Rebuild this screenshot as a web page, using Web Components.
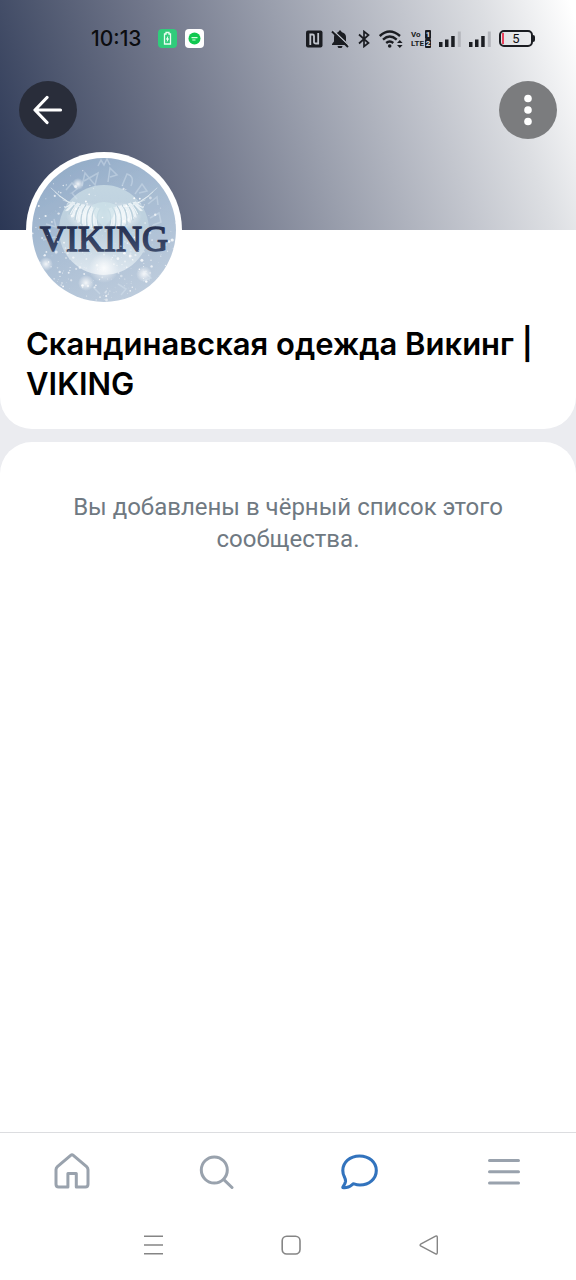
<!DOCTYPE html>
<html lang="ru">
<head>
<meta charset="utf-8">
<meta name="viewport" content="width=device-width, initial-scale=1">
<title>Скандинавская одежда Викинг | VIKING</title>
<style>
    body{
        margin: 0;
        background: #fff;
        font-family: Roboto, "Noto Sans", sans-serif;
    }
</style>
</head>
<body>
<community-page>
    <community-cover slot="cover">
        <status-bar slot="status" time="10:13" battery="5"></status-bar>
        <round-button slot="start" icon="back" label="Назад"></round-button>
        <round-button slot="end" icon="more" label="Ещё" light></round-button>
    </community-cover>
    <profile-card>
        <community-avatar slot="avatar" name="VIKING"></community-avatar>
        Скандинавская одежда Викинг | VIKING
    </profile-card>
    <notice-card>Вы добавлены в чёрный список этого сообщества.</notice-card>
    <tab-bar slot="footer"></tab-bar>
    <system-nav slot="footer"></system-nav>
</community-page>

<script>
// icons shared by the buttons and the bars
const icons = {
    back: '<svg width="30" height="30" viewBox="0 0 30 30" fill="none" stroke="currentColor" stroke-width="3.200" stroke-linecap="round" stroke-linejoin="round"><path d="M27.500 15H2.500M14 2.500L2 15l12 12.500"/></svg>',
    more: '<svg width="30" height="32" viewBox="0 0 30 32" fill="currentColor"><circle cx="15" cy="4.500" r="3.800"/><circle cx="15" cy="16" r="3.800"/><circle cx="15" cy="27.500" r="3.800"/></svg>',
    home: '<svg width="36" height="38" viewBox="0 0 36 38" fill="none" stroke="currentColor" stroke-width="3" stroke-linejoin="round"><path d="M16.700 2.300L3.400 13.600Q2 14.900 2 16.700V31.300Q2 34 4.700 34H13.900V20.500H22.300V34H31.300Q34 34 34 31.300V16.700Q34 14.900 32.600 13.600L19.300 2.300Q18 1.200 16.700 2.300Z"/></svg>',
    search: '<svg width="36" height="36" viewBox="0 0 36 36" fill="none" stroke="currentColor" stroke-width="3" stroke-linecap="round"><circle cx="16.300" cy="16" r="13"/><path d="M25.800 25.600L34 33.500"/></svg>',
    chat: '<svg width="38" height="36" viewBox="-1 0 38 36" fill="none" stroke="currentColor" stroke-width="3.100" stroke-linejoin="round"><path d="M17.500 2C27.300 2 34.300 8.300 34.300 16.500S27.100 31 18 31C15.800 31 14 30.600 12 29.900C10.500 29.400 9.800 31.800 6.300 33C4.300 33.700 2 33.800 .8 33.500C.5 33.300 3.100 30.500 3.500 27.500C3.700 25.500 3.200 24.500 2.500 23.100C1.400 21.200 .8 19 .8 16.500C.8 8.300 7.900 2 17.500 2Z"/></svg>',
    menu: '<svg width="36" height="36" viewBox="0 0 36 36" fill="none" stroke="currentColor" stroke-width="3" stroke-linecap="round"><path d="M3.500 6.500H32.500M3.500 17.700H32.500M3.500 28.900H32.500"/></svg>',
    recent: '<svg width="20" height="20" viewBox="0 0 20 20" fill="none" stroke="currentColor" stroke-width="1.600"><path d="M0 1.200H19M0 10H19M0 18.800H19"/></svg>',
    square: '<svg width="20" height="20" viewBox="0 0 20 20" fill="none" stroke="currentColor" stroke-width="1.600"><rect x="1.200" y="1.200" width="17.800" height="17.800" rx="4.500"/></svg>',
    triangle: '<svg width="20" height="20" viewBox="0 0 20 20" fill="none" stroke="currentColor" stroke-width="1.400" stroke-linejoin="round"><path d="M2.600 9.200L17.600 1.200Q19.300 .5 19.300 2.400V17.600Q19.300 19.500 17.600 18.800L2.600 10.900Q1.500 10 2.600 9.200Z"/></svg>',
    nfc: '<svg width="18" height="18" viewBox="0 0 18 18"><rect x="1" y=".5" width="16.500" height="17" rx="2" fill="#1b1d22"/><path d="M5.300 15V4.500H7.500Q9 4.500 9 6V12Q9 13.500 11 13.500H13.200V3" fill="none" stroke="#c0c4cc" stroke-width="1.800"/></svg>',
    bell: '<svg width="18" height="18" viewBox="0 0 18 18"><path d="M9 0L11 2.200Q15 3.500 15 7V11.500L17 14V15H1V14L3 11.500V7Q3 3.500 7 2.200ZM6.500 16H11.500Q11 18.500 9 18.500T6.500 16Z" fill="#1b1d22"/><path d="M2.200 .5L18 15.500" stroke="#c0c4cc" stroke-width="1.300"/><path d="M1 1.500L17 17" stroke="#1b1d22" stroke-width="1.900"/></svg>',
    bluetooth: '<svg width="14" height="18" viewBox="0 0 14 18" fill="none" stroke="#1b1d22" stroke-width="1.700"><path d="M2 4.500L11.500 13L7 16.500V1.500L11.500 5L2 13.500"/></svg>',
    wifi: '<svg width="24" height="18" viewBox="0 0 24 18"><g fill="none" stroke="#1b1d22" stroke-width="2.400"><path d="M.8 6Q10.500-3 21 6M4 9.600Q10.700 3.500 17.700 9.600M7.200 13Q10.700 10 14.300 13"/></g><circle cx="10.700" cy="16" r="1.800" fill="#1b1d22"/><path d="M18 13L20.800 10 23.600 13ZM18 15L20.800 18 23.600 15Z" fill="#1b1d22"/></svg>',
    signal: '<svg width="22" height="18" viewBox="0 0 22 18"><path d="M0 12h3.500v5H0ZM6 9.500h3.500v7.500H6ZM12.200 6h3.500v11h-3.500Z" fill="#1b1d22"/><path d="M18.800 1.500h3v15.500h-3Z" fill="#b4b6bc"/></svg>',
    charge: '<svg width="19" height="19" viewBox="0 0 19 19"><rect width="19" height="19" rx="4" fill="#30cc7b"/><path d="M6.500 5H8V3.500H11V5H12.500V15H6.500Z" fill="none" stroke="#eafff2" stroke-width="1.300"/><path d="M10.300 6.500L7.800 10.500H9.200L8.700 13.500L11.200 9.500H9.800Z" fill="#fff"/></svg>',
    message: '<svg width="19" height="19" viewBox="0 0 19 19"><rect width="19" height="19" rx="4" fill="#fff"/><circle cx="9.500" cy="9.500" r="6" fill="#10c850"/><path d="M6.500 8.700H12.500M7.300 11H10.500" stroke="#d4ffe0" stroke-width="1.200"/></svg>'
};

class CommunityPage extends HTMLElement {
    constructor() {
        super();
        this.attachShadow({mode: 'open'});
        this.shadowRoot.innerHTML = `
<style>
    :host{
        display: flex;
        flex-direction: column;
        min-height: 100vh;
        background: #fff;
    }
    main{
        flex: 1;
        display: flex;
        flex-direction: column;
        gap: 13px;
        background: #ebecf0;
    }
</style>
<slot name="cover"></slot>
<main><slot></slot></main>
<footer><slot name="footer"></slot></footer>
`;
    }
}

class CommunityCover extends HTMLElement {
    constructor() {
        super();
        this.attachShadow({mode: 'open'});
        this.shadowRoot.innerHTML = `
<style>
    :host{
        display: block;
        padding-bottom: 91px;
        background: linear-gradient(72deg, #2b3755 0%, #4f5870 17%, #70768a 33%, #9a9fad 53%, #c3c6ce 73%, #dcdee2 85%, #fff 99%);
    }
    .actions{
        display: flex;
        justify-content: space-between;
        padding: 4px 19px 0;
    }
</style>
<slot name="status"></slot>
<div class="actions">
    <slot name="start"></slot>
    <slot name="end"></slot>
</div>
`;
    }
}

class StatusBar extends HTMLElement {
    constructor() {
        super();
        this.attachShadow({mode: 'open'});
        this.shadowRoot.innerHTML = `
<style>
    :host{
        display: flex;
        align-items: center;
        justify-content: space-between;
        box-sizing: border-box;
        height: 77px;
        padding: 0 41px 0 91px;
        color: #0c0d10;
    }
    svg{
        display: block;
    }
    .group{
        display: flex;
        align-items: center;
        gap: 8px;
    }
    time{
        font: 500 21px/24px Inter, Roboto, sans-serif;
        margin-right: 8px;
    }
    .volte{
        display: grid;
        grid-template-columns: 14px 6px;
        font: bold 8px/9px Roboto, sans-serif;
        color: #1b1d22;
    }
    .volte b{
        background: #1b1d22;
        color: #d5d8de;
        text-align: center;
        border-radius: 1px;
    }
    .battery{
        display: flex;
        align-items: center;
    }
    .cell{
        box-sizing: border-box;
        width: 34px;
        height: 17px;
        border: 2px solid #1b1d22;
        border-radius: 5px;
        text-align: center;
        font: 400 13px/13px Roboto, sans-serif;
        background: linear-gradient(#e8405a, #e8405a) 1px 1px / 2px 11px no-repeat;
    }
    .cap{
        width: 2px;
        height: 7px;
        border-radius: 0 2px 2px 0;
        background: #1b1d22;
    }
</style>
<div class="group"><time></time>${icons.charge}${icons.message}</div>
<div class="group">
    ${icons.nfc}${icons.bell}${icons.bluetooth}${icons.wifi}
    <div class="volte"><span>Vo</span><b>1</b><span>LTE</span><b>2</b></div>
    ${icons.signal}${icons.signal}
    <div class="battery"><div class="cell"></div><div class="cap"></div></div>
</div>
`;
        this.shadowRoot.querySelector('time').textContent = this.getAttribute('time');
        this.shadowRoot.querySelector('.cell').textContent = this.getAttribute('battery');
    }
}

class RoundButton extends HTMLElement {
    constructor() {
        super();
        this.attachShadow({mode: 'open'});
        this.shadowRoot.innerHTML = `
<style>
    :host{
        display: block;
    }
    button{
        display: grid;
        place-items: center;
        width: 58px;
        height: 58px;
        padding: 0;
        border: 0;
        border-radius: 50%;
        color: #fff;
        background: #292d3a;
    }
    :host([light]) button{
        background: #7b7c7e;
    }
</style>
<button type="button">${icons[this.getAttribute('icon')]}</button>
`;
        this.shadowRoot.querySelector('button').setAttribute('aria-label', this.getAttribute('label'));
    }
}

class ProfileCard extends HTMLElement {
    constructor() {
        super();
        this.attachShadow({mode: 'open'});
        this.shadowRoot.innerHTML = `
<style>
    :host{
        display: block;
        padding: 0 26px 25px;
        border-radius: 0 0 32px 32px;
        background: #fff;
    }
    .avatar{
        margin-top: -78px;
    }
    h1{
        margin: 16px 0 0;
        font: 600 31px/40px Inter, Roboto, sans-serif;
        color: #000;
    }
</style>
<div class="avatar"><slot name="avatar"></slot></div>
<h1><slot></slot></h1>
`;
    }
}

class CommunityAvatar extends HTMLElement {
    constructor() {
        super();
        this.attachShadow({mode: 'open'});
        this.shadowRoot.innerHTML = `
<style>
    :host{
        display: block;
        width: 156px;
        height: 156px;
        border-radius: 50%;
        background: #fff;
        position: relative;
    }
    svg{
        display: block;
    }
    text{
        font: 36px "Liberation Serif", serif;
    }
</style>
<svg width="156" height="156" viewBox="0 0 156 156">
    <defs>
        <linearGradient id="sky" x1="0" y1="0" x2=".5" y2="1">
            <stop offset="0" stop-color="#8ba5c3"/>
            <stop offset=".5" stop-color="#a6bbd2"/>
            <stop offset="1" stop-color="#bccbdc"/>
        </linearGradient>
        <linearGradient id="moon" x1="0" y1="0" x2="0" y2="1">
            <stop offset="0" stop-color="#c3d6e2"/>
            <stop offset=".5" stop-color="#bccfdd"/>
            <stop offset="1" stop-color="#dfe8f0"/>
        </linearGradient>
        <linearGradient id="ink" x1="0" y1="0" x2="0" y2="1">
            <stop offset="0" stop-color="#20294a"/>
            <stop offset="1" stop-color="#435273"/>
        </linearGradient>
        <radialGradient id="glow">
            <stop offset="0" stop-color="#fff" stop-opacity=".85"/>
            <stop offset="1" stop-color="#fff" stop-opacity="0"/>
        </radialGradient>
        <clipPath id="disc"><circle cx="78" cy="78" r="72"/></clipPath>
    </defs>
    <g clip-path="url(#disc)">
        <rect width="156" height="156" fill="url(#sky)"/>
        <circle cx="78" cy="78" r="45" fill="url(#moon)"/>
        <g fill="none" stroke="#dce8f3" stroke-width="1.500" opacity=".4">
            <path d="M40 38l6-7 5 6-5 4 5 6M56 34l3-13 10 12 3-12-14 8M82 30l2-14 7 7-7 2M96 34l5-12q8 2 4 12M109 42l7-10 5 7-8 2M122 52l9-7 1 8M20 72l10 3-2-8M17 88l12-3M124 66l9-5 2 9-8 3M131 88l9 5-8 4"/>
            <path d="M72 14l3-6 3 5 3-6 3 6M67 135l7 7M92 132l8 5-5 6M117 119l8 7-8 3"/>
        </g>
        <g fill="url(#glow)">
            <circle cx="52" cy="32" r="6"/>
            <circle cx="20" cy="112" r="7"/>
            <circle cx="60" cy="131" r="8"/>
            <circle cx="78" cy="116" r="15"/>
            <circle cx="118" cy="122" r="8"/>
            <ellipse cx="60" cy="64" rx="20" ry="14"/>
            <ellipse cx="96" cy="64" rx="20" ry="14"/>
        </g>
        <g class="wings" fill="none" stroke-linecap="round"></g>
        <path d="M66 53q12-6 24 0l-3 12-9 11-9-11Z" fill="#cfe2ea" opacity=".7"/>
        <g class="snow" fill="#fff"></g>
        <text x="78" y="99" text-anchor="middle" fill="url(#ink)" stroke="url(#ink)" stroke-width="1.500"></text>
        <g class="frost" fill="#e6eef6"></g>
    </g>
</svg>
`;
        this.shadowRoot.querySelector('text').textContent = this.getAttribute('name');
        this.shadowRoot.querySelector('.wings').innerHTML = this.wing(-1) + this.wing(1);
        this.shadowRoot.querySelector('.snow').innerHTML = this.flakes(330, 48271, 12, 152);
        this.shadowRoot.querySelector('.frost').innerHTML = this.flakes(30, 91237, 78, 104);
    }

    // feathers fan out from the middle, side is -1 for left and 1 for right
    wing(side) {
        let out = '';
        for (let i = 0; i < 24; i++) {
            const x = 78 + side * (4 + i * 1.2);
            const y = 57 - i * 0.3;
            const tipX = 78 + side * (5 + i * 1.5);
            const tipY = 78 - i * i * 0.04 - (i % 2) * 2;
            out += `<path d="M${x} ${y}Q${x + side * 5} ${y + 6} ${tipX} ${tipY}" stroke="${i % 4 ? '#f2f8fa' : '#b5cdd9'}" stroke-width="1.300" opacity=".85"/>`;
        }
        for (let i = 0; i < 5; i++) {
            out += `<path d="M${78 + side * (20 + i * 3)} ${56 - i}Q${78 + side * 36} ${53 - i} ${78 + side * (53 - i * 4)} ${36 + i * 4}" stroke="#e4eff4" opacity=".6" stroke-width="1"/>`;
        }
        return out;
    }

    // same seed, same snow
    flakes(count, seed, top, bottom) {
        let out = '';
        const next = () => (seed = (seed * 16807) % 2147483647) / 2147483647;
        for (let i = 0; i < count; i++) {
            const x = 6 + next() * 144;
            const y = top + Math.sqrt(next()) * (bottom - top);
            const r = 0.3 + next() * next() * 1.5;
            out += `<circle cx="${x.toFixed(1)}" cy="${y.toFixed(1)}" r="${r.toFixed(1)}" opacity="${(0.4 + next() * 0.5).toFixed(1)}"/>`;
        }
        return out;
    }
}

class NoticeCard extends HTMLElement {
    constructor() {
        super();
        this.attachShadow({mode: 'open'});
        this.shadowRoot.innerHTML = `
<style>
    :host{
        display: block;
        flex: 1;
        padding: 49px 60px;
        border-radius: 32px 32px 0 0;
        background: #fff;
    }
    p{
        margin: 0;
        font-size: 24px;
        line-height: 32px;
        text-align: center;
        color: #6f7982;
    }
</style>
<p><slot></slot></p>
`;
    }
}

class TabBar extends HTMLElement {
    constructor() {
        super();
        this.attachShadow({mode: 'open'});
        this.shadowRoot.innerHTML = `
<style>
    :host{
        display: block;
        border-top: 1px solid #dcdde0;
        background: #fff;
    }
    nav{
        display: grid;
        grid-template-columns: repeat(4, 1fr);
        height: 77px;
    }
    a{
        display: grid;
        place-items: center;
        color: #99a2ad;
    }
    a[aria-current]{
        color: #3273bd;
    }
</style>
<nav>
    <a href="#home" aria-label="Главная">${icons.home}</a>
    <a href="#search" aria-label="Поиск">${icons.search}</a>
    <a href="#messages" aria-label="Сообщения" aria-current="page">${icons.chat}</a>
    <a href="#menu" aria-label="Меню">${icons.menu}</a>
</nav>
`;
    }
}

class SystemNav extends HTMLElement {
    constructor() {
        super();
        this.attachShadow({mode: 'open'});
        this.shadowRoot.innerHTML = `
<style>
    :host{
        display: grid;
        grid-template-columns: repeat(3, 24%);
        justify-content: center;
        height: 70px;
        padding-left: 6px;
        background: #fff;
    }
    button{
        display: grid;
        place-items: center;
        padding: 0;
        border: 0;
        background: none;
        color: #858585;
    }
</style>
<button type="button" aria-label="Недавние">${icons.recent}</button>
<button type="button" aria-label="Домой">${icons.square}</button>
<button type="button" aria-label="Назад">${icons.triangle}</button>
`;
    }
}

window.customElements.define('community-page', CommunityPage);
window.customElements.define('community-cover', CommunityCover);
window.customElements.define('status-bar', StatusBar);
window.customElements.define('round-button', RoundButton);
window.customElements.define('profile-card', ProfileCard);
window.customElements.define('community-avatar', CommunityAvatar);
window.customElements.define('notice-card', NoticeCard);
window.customElements.define('tab-bar', TabBar);
window.customElements.define('system-nav', SystemNav);
</script>
</body>
</html>
